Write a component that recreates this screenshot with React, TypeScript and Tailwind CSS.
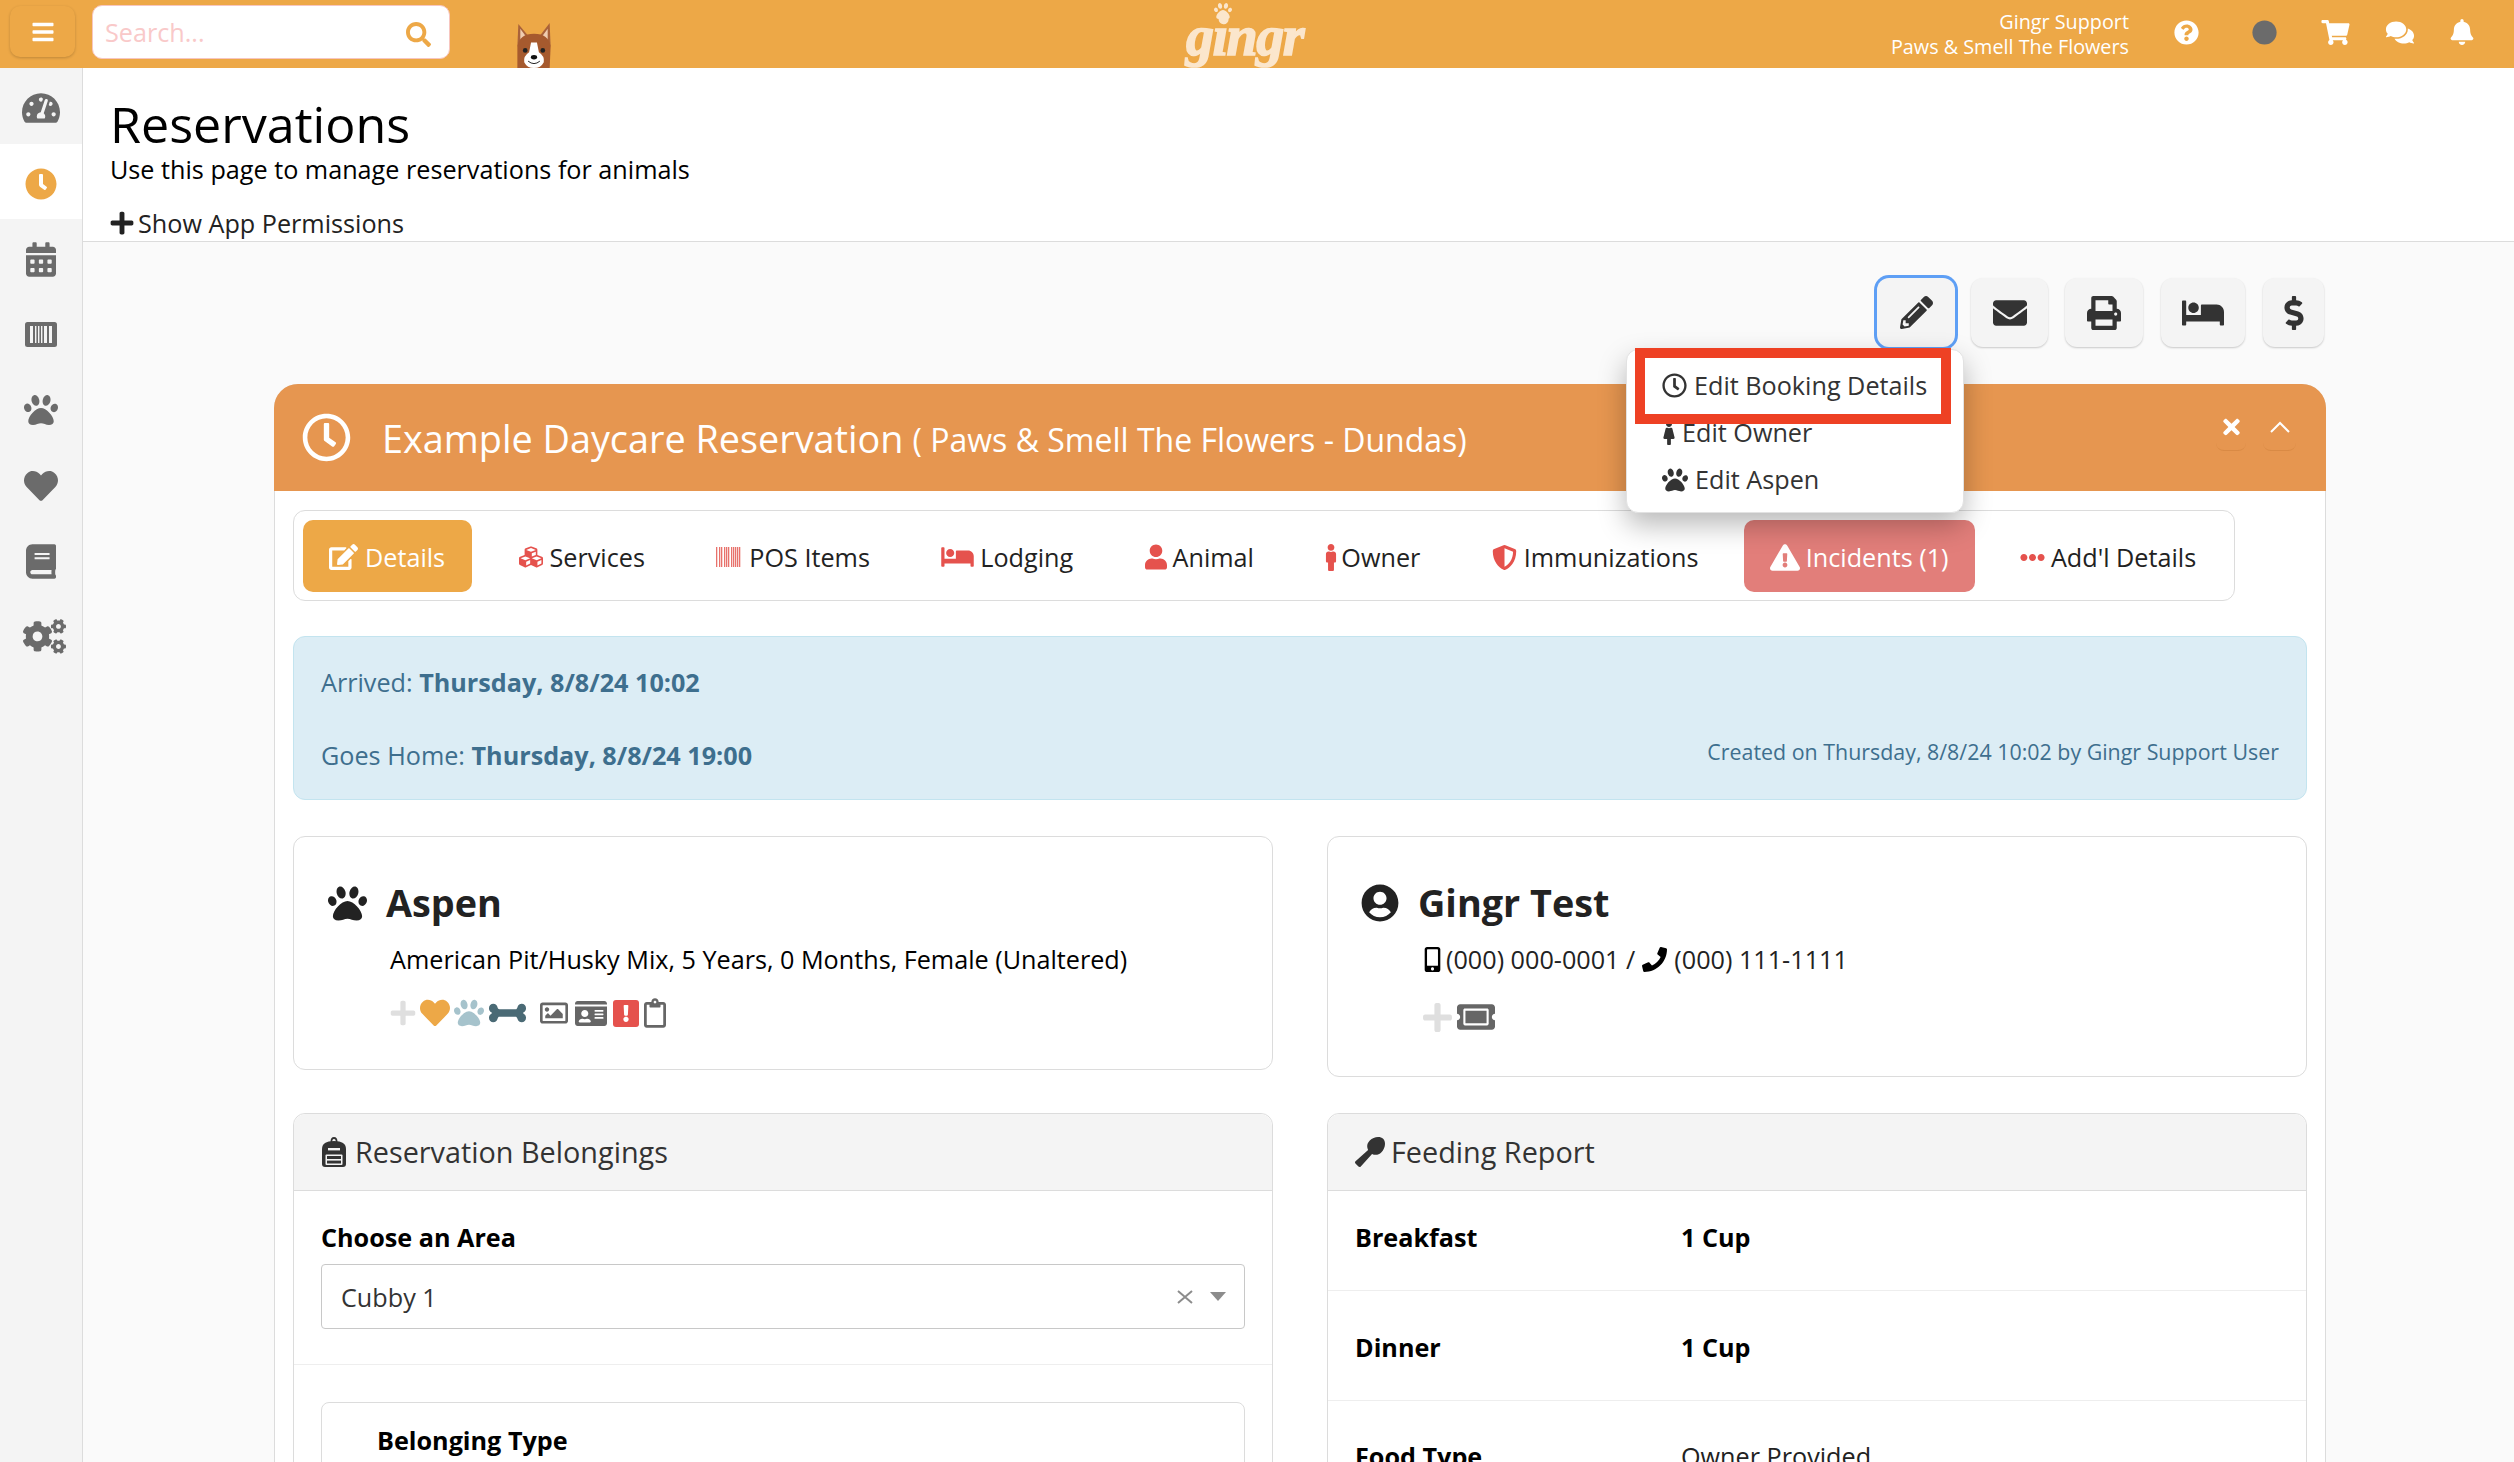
import React from "react";
import {
  FaBars, FaSearch, FaQuestionCircle, FaCircle, FaShoppingCart, FaComments, FaBell,
  FaTachometerAlt, FaClock, FaRegClock, FaCalendarAlt, FaPaw, FaHeart, FaBook, FaCogs,
  FaPlus, FaPencilAlt, FaEnvelope, FaPrint, FaBed, FaDollarSign, FaMale, FaTimes,
  FaEdit, FaCubes, FaUser, FaFemale, FaShieldAlt, FaExclamationTriangle, FaEllipsisH,
  FaBone, FaRegImage, FaIdCard, FaExclamation, FaRegClipboard, FaUserCircle, FaMobileAlt,
  FaPhone, FaTicketAlt, FaUtensilSpoon,
} from "react-icons/fa";

function Dog() {
  return (
    <svg viewBox="0 0 40 46" className="w-[40px] h-[45px] block">
      <path d="M3 24 L4 1 L14 13 Z" fill="#a9623a" />
      <path d="M6 20 L6 6 L12 14 Z" fill="#f0cdb0" />
      <path d="M37 24 L36 0 L26 13 Z" fill="#a9623a" />
      <path d="M34 20 L34 6 L28 14 Z" fill="#f0cdb0" />
      <path d="M3 46 L3 24 Q5 11 20 11 Q35 11 37 24 L36 46 Z" fill="#a65a2e" />
      <path d="M17 20 L23 20 L25 30 Q31 34 30 40 Q27 46 20 46 Q13 46 10 40 Q9 34 15 30 Z" fill="#fff" />
      <circle cx="11" cy="28" r="2.4" fill="#222" />
      <circle cx="29" cy="28" r="2.4" fill="#222" />
      <ellipse cx="20" cy="35" rx="3.2" ry="2.2" fill="#111" />
      <path d="M14 39 Q20 44 26 39" stroke="#222" strokeWidth="1" fill="none" />
    </svg>
  );
}

function Backpack() {
  return (
    <svg viewBox="0 0 24 30" className="w-[26px] h-[30px]" fill="#333">
      <path d="M8.5 5 Q8.5 0 12 0 Q15.5 0 15.5 5 L13.8 5 Q13.8 2 12 2 Q10.2 2 10.2 5 Z" />
      <path d="M0 27 L0 12 Q0 4 12 4 Q24 4 24 12 L24 27 Q24 30 21 30 L3 30 Q0 30 0 27 Z" />
      <rect x="6" y="11" width="12" height="2.4" fill="#f4f4f4" />
      <rect x="3.5" y="17.5" width="17" height="10.5" rx="1" fill="#f4f4f4" />
      <rect x="5" y="19" width="14" height="7.5" fill="#333" />
      <rect x="5" y="22" width="14" height="1.6" fill="#f4f4f4" />
    </svg>
  );
}

function BarcodeBox() {
  return (
    <svg viewBox="0 0 32 25" className="w-[32px] h-[25px]">
      <rect width="32" height="25" rx="2.5" fill="#6b6b6b" />
      <g fill="#f4f4f4">
        <rect x="5" y="4" width="3" height="17" />
        <rect x="10" y="4" width="1.4" height="17" />
        <rect x="13" y="4" width="1.4" height="17" />
        <rect x="16" y="4" width="1.4" height="17" />
        <rect x="19" y="4" width="3" height="17" />
        <rect x="24" y="4" width="3" height="17" />
      </g>
    </svg>
  );
}

function Stripes() {
  const xs = [0, 3, 5, 8, 10, 12, 15, 17, 19, 21, 23];
  return (
    <svg viewBox="0 0 26 20" className="w-[26px] h-[20px]">
      {xs.map((x) => (
        <rect key={x} x={x} y="0" width="1.3" height="20" fill="#e8726c" />
      ))}
    </svg>
  );
}

const sideItems = [
  { icon: <FaTachometerAlt className="w-[38px] h-[34px] text-[#6b6b6b]" /> },
  { icon: <FaClock className="w-[32px] h-[32px] text-[#eda847]" />, active: true },
  { icon: <FaCalendarAlt className="w-[30px] h-[35px] text-[#6b6b6b]" /> },
  { icon: <BarcodeBox /> },
  { icon: <FaPaw className="w-[34px] h-[34px] text-[#6b6b6b]" /> },
  { icon: <FaHeart className="w-[34px] h-[34px] text-[#6b6b6b]" /> },
  { icon: <FaBook className="w-[30px] h-[35px] text-[#6b6b6b]" /> },
  { icon: <FaCogs className="w-[43px] h-[35px] ml-[6px] text-[#6b6b6b]" /> },
];

const tabs = [
  { label: "Details", w: "w-[36px]", active: "bg-[#eda847] text-white pr-[27px]", icon: <FaEdit className="w-[29px] h-[26px] text-white" /> },
  { label: "Services", w: "w-[32px]", active: "text-[#222]", icon: <FaCubes className="w-[26px] h-[24px] text-[#e5524d]" /> },
  { label: "POS Items", w: "w-[33px]", active: "text-[#222]", icon: <Stripes /> },
  { label: "Lodging", w: "w-[39px]", active: "text-[#222]", icon: <FaBed className="w-[33px] h-[26px] text-[#e5524d]" /> },
  { label: "Animal", w: "w-[28px]", active: "text-[#222]", icon: <FaUser className="w-[22px] h-[26px] text-[#e5524d]" /> },
  { label: "Owner", w: "w-[16px]", active: "text-[#222]", icon: <FaMale className="w-[12px] h-[27px] text-[#e5524d]" /> },
  { label: "Immunizations", w: "w-[32px]", active: "text-[#222]", icon: <FaShieldAlt className="w-[25px] h-[27px] text-[#e5524d]" /> },
  { label: "Incidents (1)", w: "w-[36px]", active: "bg-[#e27e7a] text-white", icon: <FaExclamationTriangle className="w-[30px] h-[27px] text-white" /> },
  { label: "Add'l Details", w: "w-[31px]", active: "text-[#222]", icon: <FaEllipsisH className="w-[25px] h-[25px] text-[#e5524d]" /> },
];

const actions = [
  { w: "w-[78px]", m: "", icon: <FaPencilAlt className="w-[33px] h-[33px]" />, focus: true },
  { w: "w-[77px]", m: "ml-[16px]", icon: <FaEnvelope className="w-[34px] h-[34px]" /> },
  { w: "w-[78px]", m: "ml-[17px]", icon: <FaPrint className="w-[34px] h-[34px]" /> },
  { w: "w-[84px]", m: "ml-[18px]", icon: <FaBed className="w-[42px] h-[34px]" /> },
  { w: "w-[61px]", m: "ml-[18px]", icon: <FaDollarSign className="w-[22px] h-[34px]" /> },
];

export default function App() {
  return (
    <div className="h-[1462px] overflow-hidden flex flex-col bg-white font-['Open_Sans',sans-serif] text-[25.2px] leading-[38px] text-[#222] relative">
      <header className="h-[68px] shrink-0 bg-[#eda847] flex items-stretch text-white">
        <div className="pl-[10px] pt-[6px]">
          <button className="w-[65px] h-[51px] rounded-[10px] bg-[#eda847] shadow-[0_1px_3px_rgba(0,0,0,0.2)] flex items-center justify-center">
            <FaBars className="w-[24px] h-[24px] text-white" />
          </button>
        </div>
        <div className="ml-[17px] mt-[5px] w-[358px] h-[54px] rounded-[10px] bg-white border border-[#f7c6c0] flex items-center justify-between pl-[12px] pr-[18px]">
          <span className="text-[#f9c9c9]">Search...</span>
          <FaSearch className="w-[25px] h-[25px] text-[#eda847] mt-[5px]" />
        </div>
        <div className="ml-[64px] mt-[23px]">
          <Dog />
        </div>
        <div className="ml-[632px] mt-[2px] relative w-[120px]">
          <FaPaw className="absolute left-[28px] top-0 w-[18px] h-[18px] text-[#fbe6cc]" />
          <span className="absolute left-0 top-[6px] font-['Liberation_Serif',serif] italic font-bold text-[56px] leading-[56px] tracking-[-1.5px] text-[#fbe6cc] [-webkit-text-stroke:1.5px_#fbe6cc]">gingr</span>
        </div>
        <div className="flex-1 flex items-start justify-end">
          <div className="text-right text-[19.8px] leading-[25px] pt-[9px] mr-[45px]">
            <div>Gingr Support</div>
            <div>Paws &amp; Smell The Flowers</div>
          </div>
          <div className="flex items-center h-[64px] pr-[40px] gap-[52px]">
            <FaQuestionCircle className="w-[25px] h-[25px]" />
            <FaCircle className="w-[25px] h-[25px] text-[#6b6b6b] ml-[1px]" />
            <FaShoppingCart className="w-[29px] h-[25px] -ml-[8px]" />
            <FaComments className="w-[30px] h-[25px] -ml-[17px]" />
            <FaBell className="w-[24px] h-[26px] -ml-[17px]" />
          </div>
        </div>
      </header>

      <div className="flex flex-1 min-h-0">
        <aside className="w-[83px] shrink-0 bg-[#f4f4f4] border-r border-[#dcdcdc] flex flex-col">
          {sideItems.map((it, i) => (
            <div key={i} className={`h-[75.5px] pt-[5px] flex items-center justify-center ${it.active ? "bg-white" : ""}`}>
              {it.icon}
            </div>
          ))}
        </aside>

        <main className="flex-1 min-w-0 bg-[#fafafa] flex flex-col">
          <section className="h-[174px] shrink-0 bg-white border-b border-[#dcdcdc] pl-[27px] pt-[23px] text-black">
            <h1 className="text-[50.2px] leading-[66px] font-normal">Reservations</h1>
            <p className="leading-[38px] -mt-[7px]">Use this page to manage reservations for animals</p>
            <p className="mt-[19px] flex items-center leading-[32px] text-[#222]">
              <FaPlus className="w-[26px] h-[26px] -ml-[1px] mr-[3px]" />
              Show App Permissions
            </p>
          </section>

          <section className="pl-[191px] pr-[188px] flex-1 min-h-0">
            <div className="flex justify-end pt-[36px] pr-[2px] relative">
              {actions.map((a, i) => (
                <button
                  key={i}
                  className={`${a.w} ${a.m} h-[69px] rounded-[12px] bg-[#f4f4f4] text-[#333] flex items-center justify-center ${a.focus ? "shadow-[0_0_0_3px_#5e9ff5]" : "shadow-[0_1px_2px_rgba(0,0,0,0.2)]"}`}
                >
                  {a.icon}
                </button>
              ))}

              <div className="absolute right-[362px] top-[107px] w-[338px] h-[164px] z-20 bg-white rounded-[12px] border border-[#e2e2e2] shadow-[0_12px_28px_rgba(0,0,0,0.28)] pt-[12px] pl-[35px] text-[#333] leading-[47px]">
                <div className="flex items-center h-[47px]">
                  <FaRegClock className="w-[25px] h-[25px] mr-[7px]" />
                  Edit Booking Details
                </div>
                <div className="flex items-center h-[47px]">
                  <FaFemale className="w-[12px] h-[26px] mr-[7px] ml-[1px]" />
                  Edit Owner
                </div>
                <div className="flex items-center h-[47px]">
                  <FaPaw className="w-[26px] h-[26px] mr-[7px]" />
                  Edit Aspen
                </div>
              </div>
              <div className="absolute right-[375px] top-[106px] w-[316px] h-[76px] z-30 border-[10px] border-[#ee4124]" />
            </div>

            <div className="mt-[37px] h-[1200px] bg-white border border-[#dcdcdc] rounded-t-[24px]">
              <div className="-mx-px -mt-px h-[107px] rounded-t-[24px] bg-[#e69650] text-white flex items-center pl-[28px] pr-[30px] pt-[2px]">
                <FaRegClock className="w-[49px] h-[49px] shrink-0 -mt-[2px]" />
                <span className="ml-[31px] text-[37.8px] leading-[50px]">Example Daycare Reservation</span>
                <span className="ml-[9px] text-[32px] leading-[50px] pt-[2px]">( Paws &amp; Smell The Flowers - Dundas)</span>
                <div className="ml-auto flex items-start gap-[17px] -mt-[12px]">
                  <span className="w-[30px] h-[36px] rounded-[8px] border-b border-[#d98a45] flex items-start justify-center">
                    <FaTimes className="w-[17px] h-[24px]" />
                  </span>
                  <span className="w-[33px] h-[36px] rounded-[8px] border-b border-[#d98a45] flex items-start justify-center pt-[6px]">
                    <svg viewBox="0 0 20 12" className="w-[20px] h-[12px]" fill="none" stroke="#fff" strokeWidth="2">
                      <path d="M1 11 L10 2 L19 11" />
                    </svg>
                  </span>
                </div>
              </div>

              <div className="px-[18px] pt-[19px]">
                <div className="mr-[72px] h-[91px] rounded-[12px] border border-[#dcdcdc] bg-white p-[9px] flex gap-[19.4px]">
                  {tabs.map((t) => (
                    <div key={t.label} className={`h-[72px] pt-[2px] px-[26px] rounded-[10px] flex items-center whitespace-nowrap ${t.active}`}>
                      <span className={`${t.w} flex items-center`}>{t.icon}</span>
                      {t.label}
                    </div>
                  ))}
                </div>

                <div className="mt-[35px] h-[164px] rounded-[12px] bg-[#dcedf5] border border-[#c3e4ef] px-[27px] text-[#3e6f8e] flex items-end justify-between pb-[25px]">
                  <div>
                    <p className="leading-[38px]">Arrived: <b className="font-bold">Thursday, 8/8/24 10:02</b></p>
                    <p className="leading-[38px] mt-[35px]">Goes Home: <b className="font-bold">Thursday, 8/8/24 19:00</b></p>
                  </div>
                  <p className="text-[21.4px] leading-[32px] pb-[6px]">Created on Thursday, 8/8/24 10:02 by Gingr Support User</p>
                </div>

                <div className="mt-[36px] grid grid-cols-2 gap-x-[54px]">
                  <div className="h-[234px] rounded-[12px] border border-[#dcdcdc] bg-white pl-[34px] pt-[38px] self-start">
                    <div className="flex items-center h-[56px]">
                      <FaPaw className="w-[39px] h-[39px] text-[#222]" />
                      <h2 className="ml-[19px] text-[37.8px] font-bold leading-[56px] text-[#222]">Aspen</h2>
                    </div>
                    <p className="ml-[62px] mt-[9px] text-black leading-[38px]">American Pit/Husky Mix, 5 Years, 0 Months, Female (Unaltered)</p>
                    <div className="ml-[61px] mt-[20px] flex items-center h-[30px]">
                      <FaPlus className="w-[28px] h-[28px] text-[#dfdfdf]" />
                      <FaHeart className="ml-[3px] w-[30px] h-[30px] text-[#eda847]" />
                      <FaPaw className="ml-[4px] w-[30px] h-[30px] text-[#a6c3cc]" />
                      <FaBone className="ml-[5px] w-[37px] h-[30px] text-[#4a6a75]" />
                      <FaRegImage className="ml-[14px] w-[28px] h-[28px] text-[#666]" />
                      <FaIdCard className="ml-[7px] w-[32px] h-[29px] text-[#666]" />
                      <span className="ml-[6px] w-[26px] h-[27px] rounded-[3px] bg-[#e5524d] flex items-center justify-center">
                        <FaExclamation className="w-[16px] h-[17px] text-white" />
                      </span>
                      <FaRegClipboard className="ml-[5px] w-[22px] h-[30px] text-[#666]" />
                    </div>
                  </div>

                  <div className="h-[241px] rounded-[12px] border border-[#dcdcdc] bg-white pl-[33px] pt-[38px] self-start">
                    <div className="flex items-center h-[56px]">
                      <FaUserCircle className="w-[38px] h-[38px] text-[#222]" />
                      <h2 className="ml-[19px] text-[37.8px] font-bold leading-[56px] text-[#222]">Gingr Test</h2>
                    </div>
                    <p className="ml-[62px] mt-[9px] flex items-center text-[#222] leading-[38px]">
                      <FaMobileAlt className="w-[19px] h-[25px] text-black mr-[4px]" />
                      (000) 000-0001 /
                      <FaPhone className="w-[25px] h-[25px] text-black mx-[7px]" />
                      (000) 111-1111
                    </p>
                    <div className="ml-[60px] mt-[24px] flex items-center h-[30px]">
                      <FaPlus className="w-[33px] h-[33px] text-[#dfdfdf]" />
                      <FaTicketAlt className="ml-[3px] w-[38px] h-[34px] text-[#666]" />
                    </div>
                  </div>
                </div>

                <div className="mt-[36px] grid grid-cols-2 gap-x-[54px] items-start relative">
                  <div className="rounded-t-[12px] border border-[#dcdcdc] bg-white">
                    <div className="h-[77px] rounded-t-[12px] bg-[#f4f4f4] border-b border-[#dcdcdc] flex items-center pl-[27px] text-[#333] text-[28.8px]">
                      <Backpack />
                      <span className="ml-[8px]">Reservation Belongings</span>
                    </div>
                    <div className="px-[27px] pt-[27px] pb-[35px] border-b border-[#eeeeee]">
                      <label className="block font-bold text-black leading-[38px]">Choose an Area</label>
                      <div className="mt-[8px] h-[65px] rounded-[4px] border border-[#c8c8c8] flex items-center pl-[19px] pr-[18px] text-[#333]">
                        <span>Cubby 1</span>
                        <svg viewBox="0 0 16 14" className="ml-auto w-[16px] h-[14px]" fill="none" stroke="#8c8c8c" strokeWidth="2">
                          <path d="M1 1 L15 13 M15 1 L1 13" />
                        </svg>
                        <span className="ml-[17px] w-0 h-0 border-x-[8px] border-x-transparent border-t-[9px] border-t-[#8c8c8c]" />
                      </div>
                    </div>
                    <div className="px-[27px] pt-[37px]">
                      <div className="h-[120px] rounded-[8px] border border-[#dcdcdc] pl-[55px] pt-[18px] font-bold text-black">
                        Belonging Type
                      </div>
                    </div>
                  </div>

                  <div className="rounded-t-[12px] border border-[#dcdcdc] bg-white">
                    <div className="h-[77px] rounded-t-[12px] bg-[#f4f4f4] border-b border-[#dcdcdc] flex items-center pl-[27px] text-[#333] text-[28.8px]">
                      <FaUtensilSpoon className="w-[30px] h-[30px] text-[#333]" />
                      <span className="ml-[6px]">Feeding Report</span>
                    </div>
                    <div className="h-[100px] border-b border-[#eeeeee] pl-[27px] pt-[27px] flex font-bold text-black">
                      <span className="w-[326px]">Breakfast</span>
                      <span>1 Cup</span>
                    </div>
                    <div className="h-[110px] border-b border-[#eeeeee] pl-[27px] pt-[37px] flex font-bold text-black">
                      <span className="w-[326px]">Dinner</span>
                      <span>1 Cup</span>
                    </div>
                    <div className="h-[110px] pl-[27px] pt-[36px] flex text-black">
                      <span className="w-[326px] font-bold">Food Type</span>
                      <span className="text-[#222]">Owner Provided</span>
                    </div>
                  </div>
                </div>
              </div>
            </div>
          </section>
        </main>
      </div>
    </div>
  );
}
